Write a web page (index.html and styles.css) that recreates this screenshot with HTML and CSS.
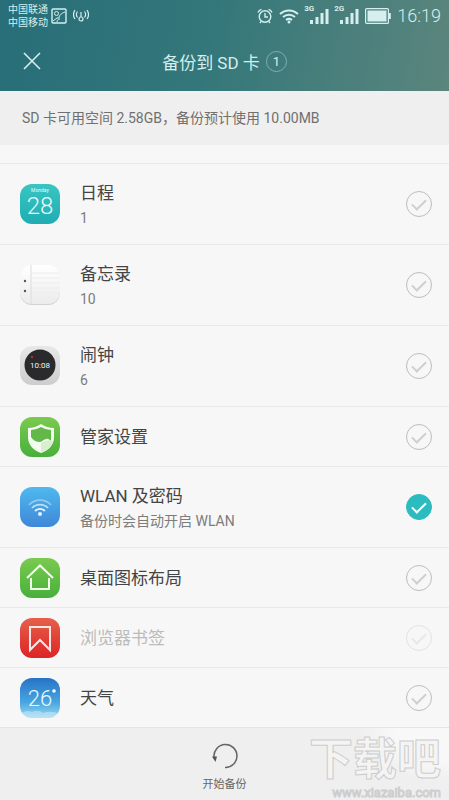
FILE: index.html
```html
<!DOCTYPE html>
<html lang="zh-CN">
<head>
    <meta charset="UTF-8">
    <meta name="viewport" content="width=device-width, initial-scale=1.0">
    <title>备份到 SD 卡</title>
    <link rel="stylesheet" href="styles.css">
</head>
<body>

    <header class="top">
        <div class="status">
            <div class="carriers">
                <div>中国联通</div>
                <div>中国移动</div>
            </div>
            <svg class="picture" width="16" height="16" viewBox="0 0 16 16" fill="none" stroke="currentColor">
                <rect x="1" y="1" width="14" height="14" rx="1" stroke-width="1.4"/>
                <circle cx="5.5" cy="5.5" r="2"/>
                <path d="M2 13l4-3h2c0-3 3-5 6-6M6 14c0-2 1-3 3-3"/>
            </svg>
            <svg class="hotspot" width="16" height="16" viewBox="0 0 16 16" fill="none" stroke="currentColor" stroke-width="1.2">
                <circle cx="8" cy="11" r="2"/>
                <path d="M8 9V4M4.500 3.500a5 5 0 0 0 0 6M11.500 3.500a5 5 0 0 1 0 6M2 2a8 8 0 0 0 0 9M14 2a8 8 0 0 1 0 9"/>
            </svg>
            <div class="signals">
                <svg width="16" height="16" viewBox="0 0 16 16" fill="none" stroke="currentColor" stroke-width="1.400">
                    <circle cx="8" cy="8.500" r="5.800"/>
                    <path d="M8 5v4h3M1 4.500Q2 2 4.500 1.300M15 4.500Q14 2 11.500 1.300M4 13.500l-1 1.500M12 13.500l1 1.500"/>
                </svg>
                <svg width="20" height="16" viewBox="0 0 20 16" fill="none" stroke="currentColor" stroke-width="2">
                    <path d="M1 6a13 13 0 0 1 18 0M4 9a9 9 0 0 1 12 0M7 12a5 5 0 0 1 6 0"/>
                    <circle cx="10" cy="14" r="1.500" fill="currentColor" stroke="none"/>
                </svg>
                <div class="cell">
                    <span>3G</span>
                    <svg width="19" height="16" viewBox="0 0 19 16" fill="currentColor">
                        <path d="M0 12h3v4H0zM5.500 9h3v7h-3zM10.500 5h3v11h-3zM15.500 1h3v15h-3z"/>
                    </svg>
                </div>
                <div class="cell">
                    <span>2G</span>
                    <svg width="19" height="16" viewBox="0 0 19 16" fill="currentColor">
                        <path d="M0 12h3v4H0zM5.500 9h3v7h-3zM10.500 5h3v11h-3zM15.500 1h3v15h-3z"/>
                    </svg>
                </div>
                <svg width="26" height="16" viewBox="0 0 26 16">
                    <rect x=".6" y=".6" width="22.800" height="14.800" rx="1" fill="none" stroke="currentColor" stroke-width="1.200"/>
                    <path d="M2.500 2.500h19v11h-19zM24 5h1.800v6H24z" fill="currentColor"/>
                </svg>
                <time>16:19</time>
            </div>
        </div>
        <div class="title-bar">
            <button class="close" aria-label="关闭">
                <svg width="18" height="18" viewBox="0 0 18 18" fill="none" stroke="currentColor" stroke-width="1.600">
                    <path d="M1 1l16 16M17 1L1 17"/>
                </svg>
            </button>
            <h1>备份到 SD 卡 <span class="badge">1</span></h1>
        </div>
    </header>

    <p class="info">SD 卡可用空间 2.58GB，备份预计使用 10.00MB</p>

    <main class="list">
        <label class="row tall">
            <svg class="icon" viewBox="0 0 40 40">
                <defs>
                    <linearGradient id="teal" x2="0" y2="1"><stop stop-color="#38c5c3"/><stop offset="1" stop-color="#20adb2"/></linearGradient>
                </defs>
                <rect width="40" height="40" rx="12" fill="url(#teal)"/>
                <text x="20" y="8" class="day">Monday</text>
                <text x="20" y="30" class="date">28</text>
            </svg>
            <span class="text"><span class="name">日程</span><span class="count">1</span></span>
            <input type="checkbox">
        </label>
        <label class="row tall">
            <svg class="icon" viewBox="0 0 40 40">
                <defs>
                    <linearGradient id="paper" x2="0" y2="1"><stop stop-color="#fff"/><stop offset="1" stop-color="#ececec"/></linearGradient>
                </defs>
                <rect y="1" width="40" height="39" rx="12" fill="#d2d2d2"/>
                <rect width="40" height="39" rx="12" fill="url(#paper)"/>
                <path d="M12 8h27M12 13h28M12 18h28M12 23h28M12 28h28M12 33h25" stroke="#ededed"/>
                <path d="M11 0v39" stroke="#dcdcdc"/>
                <circle cx="5" cy="16" r="1.200" fill="#555"/>
                <circle cx="5" cy="26" r="1.200" fill="#555"/>
            </svg>
            <span class="text"><span class="name">备忘录</span><span class="count">10</span></span>
            <input type="checkbox">
        </label>
        <label class="row tall">
            <svg class="icon" viewBox="0 0 40 40">
                <defs>
                    <linearGradient id="silver" x2="0" y2="1"><stop stop-color="#e8e8e8"/><stop offset="1" stop-color="#cdcdcd"/></linearGradient>
                </defs>
                <rect width="40" height="39" rx="12" fill="url(#silver)"/>
                <circle cx="20" cy="19" r="15.500" fill="#2a292b"/>
                <circle cx="12" cy="11" r="1.200" fill="#b02c4c"/>
                <text x="20" y="22" class="clock">10:08</text>
            </svg>
            <span class="text"><span class="name">闹钟</span><span class="count">6</span></span>
            <input type="checkbox">
        </label>
        <label class="row">
            <svg class="icon" viewBox="0 0 40 40">
                <defs>
                    <linearGradient id="green" x2="0" y2="1"><stop stop-color="#7bca50"/><stop offset="1" stop-color="#46b03a"/></linearGradient>
                </defs>
                <rect width="40" height="40" rx="12" fill="url(#green)"/>
                <path d="M21 7Q27 11 34 11V20Q34 31 21 36Q8 31 8 20V11Q15 11 21 7z" fill="#f4fbf0"/>
                <path d="M21 10Q26 13 31 13V24C26 19 24 24 20 25Q14 25 11 20V13Q16 13 21 10z" fill="#62b947"/>
                <path d="M21 26Q28 22 33 24Q31 32 21 36z" fill="#d9eecf"/>
            </svg>
            <span class="text"><span class="name">管家设置</span></span>
            <input type="checkbox">
        </label>
        <label class="row tall">
            <svg class="icon" viewBox="0 0 40 40" fill="none">
                <defs>
                    <linearGradient id="blue" x2="0" y2="1"><stop stop-color="#4fb9ee"/><stop offset="1" stop-color="#3f87d8"/></linearGradient>
                </defs>
                <rect width="40" height="40" rx="12" fill="url(#blue)"/>
                <g stroke="#fff" stroke-width="1.800">
                    <path d="M9 18a15 15 0 0 1 22 0" opacity=".4"/>
                    <path d="M12 21a11 11 0 0 1 16 0" opacity=".65"/>
                    <path d="M15 24a7 7 0 0 1 10 0" opacity=".85"/>
                </g>
                <circle cx="20" cy="27" r="2" fill="#e8f4ff"/>
            </svg>
            <span class="text"><span class="name">WLAN 及密码</span><span class="note">备份时会自动开启 WLAN</span></span>
            <input type="checkbox" checked>
        </label>
        <label class="row">
            <svg class="icon" viewBox="0 0 40 40" fill="none">
                <rect width="40" height="40" rx="12" fill="url(#green)"/>
                <path d="M7 20L20 7.500 33 20M11 20v11h18V20" stroke="#f2fbee" stroke-width="2"/>
            </svg>
            <span class="text"><span class="name">桌面图标布局</span></span>
            <input type="checkbox">
        </label>
        <label class="row off">
            <svg class="icon" viewBox="0 0 40 40" fill="none">
                <defs>
                    <linearGradient id="red" x2="0" y2="1"><stop stop-color="#e5604a"/><stop offset="1" stop-color="#dd2426"/></linearGradient>
                </defs>
                <rect width="40" height="40" rx="12" fill="url(#red)"/>
                <path d="M10 9h20v23l-10-10-10 10z" stroke="#fbe8e6" stroke-width="2"/>
            </svg>
            <span class="text"><span class="name">浏览器书签</span></span>
            <input type="checkbox" disabled>
        </label>
        <label class="row">
            <svg class="icon" viewBox="0 0 40 40">
                <defs>
                    <linearGradient id="sky" x2="0" y2="1"><stop stop-color="#2673c6"/><stop offset=".6" stop-color="#48a5e0"/><stop offset="1" stop-color="#9bd8f0"/></linearGradient>
                    <clipPath id="tile"><rect width="40" height="40" rx="12"/></clipPath>
                </defs>
                <g clip-path="url(#tile)">
                    <rect width="40" height="40" fill="url(#sky)"/>
                    <path d="M0 36q6-5 12-2 6-3 11 1 8-3 17 1v4H0z" fill="#d3eef8" opacity=".5"/>
                </g>
                <text x="20" y="28" class="temp">26</text>
                <circle cx="34" cy="13" r="1.800" fill="#fff"/>
            </svg>
            <span class="text"><span class="name">天气</span></span>
            <input type="checkbox">
        </label>
    </main>

    <footer class="bottom">
        <button class="start">
            <svg width="26" height="26" viewBox="0 0 26 26">
                <path d="M13 24.500A11.500 11.500 0 1 0 2 14" fill="none" stroke="#666" stroke-width="1.600"/>
                <path d="M0 13.500h5L3.500 19z" fill="#555"/>
            </svg>
            开始备份
        </button>
        <div class="watermark">
            <div class="mark-name">下载吧</div>
            <div class="mark-url">www.xiazaiba.com</div>
        </div>
    </footer>

</body>
</html>
```

FILE: styles.css
```css
* {
    box-sizing: border-box;
}
body {
    display: flex;
    flex-direction: column;
    min-height: 100vh;
    margin: 0;
    font-family: Roboto, "Noto Sans CJK SC", sans-serif;
    background-color: #f7f7f7;
    color: #444;
}
svg {
    display: block;
    flex: none;
}
button {
    padding: 0;
    border: none;
    background: none;
    font-family: inherit;
    color: inherit;
    cursor: pointer;
}

/* Header */
.top {
    background: linear-gradient(100deg, #286e78 0%, #33777a 45%, #5b857d 100%);
    color: #d5eeee;
}
.status {
    display: flex;
    align-items: center;
    height: 31px;
    padding: 0 8px;
}
.carriers {
    font-size: 10px;
    line-height: 13px;
}
.picture {
    margin-left: 3px;
}
.hotspot {
    margin-left: 6px;
}
.signals {
    display: flex;
    align-items: center;
    gap: 6px;
    margin-left: auto;
}
.cell {
    position: relative;
    padding-left: 5px;
}
.cell span {
    position: absolute;
    top: -3px;
    left: -1px;
    font-size: 8px;
    line-height: 8px;
    font-weight: bold;
}
.status time {
    font-size: 18px;
    font-weight: 300;
}
.title-bar {
    display: grid;
    grid-template-columns: 64px 1fr 64px;
    align-items: center;
    height: 60px;
}
.close {
    display: flex;
    justify-content: center;
    align-items: center;
    height: 48px;
}
h1 {
    display: flex;
    justify-content: center;
    align-items: center;
    gap: 6px;
    margin: 0;
    font-size: 17px;
    font-weight: normal;
}
.badge {
    width: 21px;
    height: 21px;
    border: 1px solid #7fb0ae;
    border-radius: 50%;
    font-size: 13px;
    line-height: 19px;
    text-align: center;
}
.info {
    margin: 0;
    padding: 18px 22px;
    background-color: #efefef;
    color: #707070;
    font-size: 14px;
    line-height: 18px;
}

/* List */
.list {
    flex: 1;
    padding-top: 18px;
}
.row {
    display: flex;
    align-items: center;
    height: 60px;
    padding: 0 17px 0 20px;
    border-top: 1px solid #e9e9e9;
}
.row.tall {
    height: 81px;
}
.icon {
    width: 40px;
    height: 40px;
}
.text {
    display: flex;
    flex: 1;
    flex-direction: column;
    margin-left: 20px;
}
.name {
    font-size: 17px;
    line-height: 28px;
}
.count, .note {
    color: #7c7c7c;
    font-size: 14px;
    line-height: 22px;
}
.off .name {
    color: #bbb;
}
.day, .date, .clock, .temp {
    fill: #e9fbfb;
    text-anchor: middle;
}
.day {
    font-size: 5px;
}
.date {
    font-size: 24px;
    font-weight: 300;
}
.clock {
    font-size: 8px;
}
.temp {
    font-size: 22px;
    font-weight: 300;
}
input[type="checkbox"] {
    appearance: none;
    display: flex;
    justify-content: center;
    width: 26px;
    height: 26px;
    margin: 0;
    border: 1px solid #bdbdbd;
    border-radius: 50%;
}
input[type="checkbox"]::after {
    content: "";
    width: 12px;
    height: 6px;
    margin-top: 7px;
    border: solid #cfcfcf;
    border-width: 0 0 2px 2px;
    transform: rotate(-45deg);
}
input[type="checkbox"]:checked {
    border-color: #2cbcbf;
    background-color: #2cbcbf;
}
input[type="checkbox"]:checked::after {
    border-color: #fff;
}
input[type="checkbox"]:disabled {
    opacity: 0.35;
}

/* Footer */
.bottom {
    position: relative;
    display: flex;
    justify-content: center;
    height: 74px;
    border-top: 1px solid #e5e5e5;
    background: radial-gradient(ellipse 90px 55px at 100% 0, #f8f8f8 60%, #efefef 100%);
}
.start {
    display: flex;
    flex-direction: column;
    align-items: center;
    gap: 7px;
    padding-top: 15px;
    color: #666;
    font-size: 11px;
    line-height: 18px;
}
.watermark {
    position: absolute;
    right: 8px;
    bottom: 1px;
    color: #f4f4f4;
    text-align: right;
    -webkit-text-stroke: 1px #cdcdcd;
}
.mark-name {
    font-size: 44px;
    font-weight: bold;
    line-height: 52px;
}
.mark-url {
    font-size: 13px;
    line-height: 14px;
}
```
